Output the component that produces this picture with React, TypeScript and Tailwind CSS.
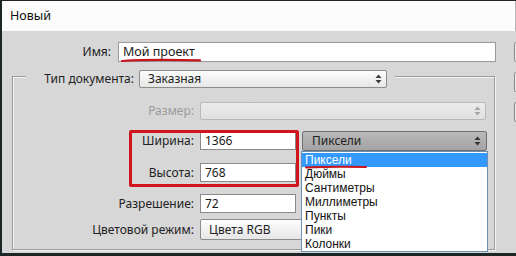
import React from "react"

function Arrows({ color = "#3a3a3a" }: { color?: string }) {
  return (
    <svg width="7" height="10" viewBox="0 0 7 10" className="shrink-0">
      <path d="M3.5 0.5 L6.5 4 L0.5 4 Z" fill={color} />
      <path d="M0.5 6 L6.5 6 L3.5 9.5 Z" fill={color} />
    </svg>
  )
}

function Field({ value, className = "" }: { value: string; className?: string }) {
  return (
    <div
      className={
        "flex items-center bg-white border border-[#8a8a8a] pl-[4px] text-[#1a1a1a] whitespace-nowrap " +
        className
      }
    >
      {value}
    </div>
  )
}

const units = ["Пиксели", "Дюймы", "Сантиметры", "Миллиметры", "Пункты", "Пики", "Колонки"]

export default function App() {
  return (
    <div className="w-[516px] h-[256px] overflow-hidden flex flex-col bg-[#d7d7d7] border-t border-l-2 border-b-[3px] border-[#1d2626] font-['Noto_Sans',sans-serif] text-[12px] text-[#222]">
      {/* title bar */}
      <div className="h-[30px] shrink-0 bg-[#fcfcfc] border-r border-[#b9b9b9] flex items-center pl-[8px] text-[12.5px] text-[#111]">
        Новый
      </div>

      {/* body */}
      <div className="flex flex-1">
        <div className="w-[508px] shrink-0 flex flex-col">
          {/* name */}
          <div className="mt-[11px] flex items-center h-[20px]">
            <div className="w-[109px] text-right">Имя:</div>
            <div className="relative ml-[7px] w-[378px] h-[20px]">
              <Field value="Мой проект" className="h-full w-full pl-[3px] text-[12.5px] border-[#9a9a9a]" />
              <svg className="absolute left-[3px] top-[16px]" width="80" height="5" viewBox="0 0 80 5">
                <path d="M1 3 Q 30 1.2 79 2.4" stroke="#c8141b" strokeWidth="2.2" fill="none" strokeLinecap="round" />
              </svg>
            </div>
          </div>

          {/* group box */}
          <div className="relative mt-[14px] ml-[10px] w-[483px] h-[174px] border border-[#9c9c9c] shadow-[inset_1px_1px_0_#f4f4f4,1px_1px_0_#f4f4f4]">
            {/* legend */}
            <div className="-mt-[7px] ml-[13px] w-fit flex items-center h-[18px] bg-[#d7d7d7] pl-[17px] pr-[8px]">
              <div className="w-[91px] text-right whitespace-nowrap">Тип документа:</div>
              <div className="ml-[5px] w-[248px] h-[18px] flex items-center justify-between pl-[8px] pr-[4px] rounded-[2px] border border-[#8c8c8c] bg-gradient-to-b from-[#fdfdfd] to-[#e6e6e6]">
                <span>Заказная</span>
                <Arrows />
              </div>
            </div>

            {/* size */}
            <div className="mt-[14px] flex items-center h-[18px]">
              <div className="w-[181px] text-right text-[#9b9b9b]">Размер:</div>
              <div className="ml-[6px] w-[286px] h-[18px] flex items-center justify-end pr-[4px] rounded-[2px] border border-[#b8b8b8] bg-gradient-to-b from-[#ececec] to-[#e0e0e0]">
                <Arrows color="#a4a4a4" />
              </div>
            </div>

            {/* width */}
            <div className="mt-[11px] flex items-center h-[20px]">
              <div className="w-[181px] text-right">Ширина:</div>
              <Field value="1366" className="ml-[6px] w-[96px] h-[18px]" />
              <div className="ml-[6px] w-[185px] h-[20px] flex items-center justify-between pl-[9px] pr-[5px] rounded-[2px] border border-[#6f6f6f] bg-gradient-to-b from-[#b9b9b9] to-[#a3a3a3]">
                <span>Пиксели</span>
                <Arrows color="#333" />
              </div>
            </div>

            {/* height */}
            <div className="mt-[12px] flex items-center h-[19px]">
              <div className="w-[181px] text-right">Высота:</div>
              <Field value="768" className="ml-[6px] w-[96px] h-[19px]" />
            </div>

            {/* resolution */}
            <div className="mt-[12px] flex items-center h-[19px]">
              <div className="w-[181px] text-right">Разрешение:</div>
              <Field value="72" className="ml-[6px] w-[96px] h-[19px]" />
            </div>

            {/* colour mode */}
            <div className="mt-[6px] flex items-center h-[21px]">
              <div className="w-[181px] text-right">Цветовой режим:</div>
              <div className="ml-[6px] w-[150px] h-[21px] flex items-center pl-[8px] rounded-[2px] border border-[#8c8c8c] bg-gradient-to-b from-[#fdfdfd] to-[#e6e6e6]">
                Цвета RGB
              </div>
            </div>

            {/* red frame */}
            <div className="absolute left-[116px] top-[53px] w-[170px] h-[57px] border-[3px] border-[#d0141b] rounded-[2px]" />

            {/* open list */}
            <div className="absolute left-[288px] top-[74px] w-[187px] h-[101px] bg-white border border-[#6d8fb0] pt-px font-['Liberation_Sans',sans-serif] text-[12px] text-[#111]">
              {units.map((u, i) => (
                <div
                  key={u}
                  className={
                    "h-[14px] leading-[14px] pl-[3px] whitespace-nowrap " +
                    (i === 0 ? "bg-[#3399ff] text-white" : "")
                  }
                >
                  {u}
                </div>
              ))}
              <svg className="absolute left-[3px] top-[13px]" width="62" height="4" viewBox="0 0 62 4">
                <path d="M1 2.4 Q 30 1.2 61 2" stroke="#c8141b" strokeWidth="2" fill="none" strokeLinecap="round" />
              </svg>
            </div>
          </div>
        </div>

        {/* buttons on the right, cut off */}
        <div className="ml-[4px] flex flex-col gap-[10px] pt-[11px]">
          <div className="w-[80px] h-[20px] rounded-[2px] border border-[#8c8c8c] bg-[#e8e8e8]" />
          <div className="w-[80px] h-[20px] rounded-[2px] border border-[#8c8c8c] bg-[#e8e8e8]" />
          <div className="w-[80px] h-[20px] rounded-[2px] border border-[#8c8c8c] bg-[#e8e8e8]" />
        </div>
      </div>
    </div>
  )
}
